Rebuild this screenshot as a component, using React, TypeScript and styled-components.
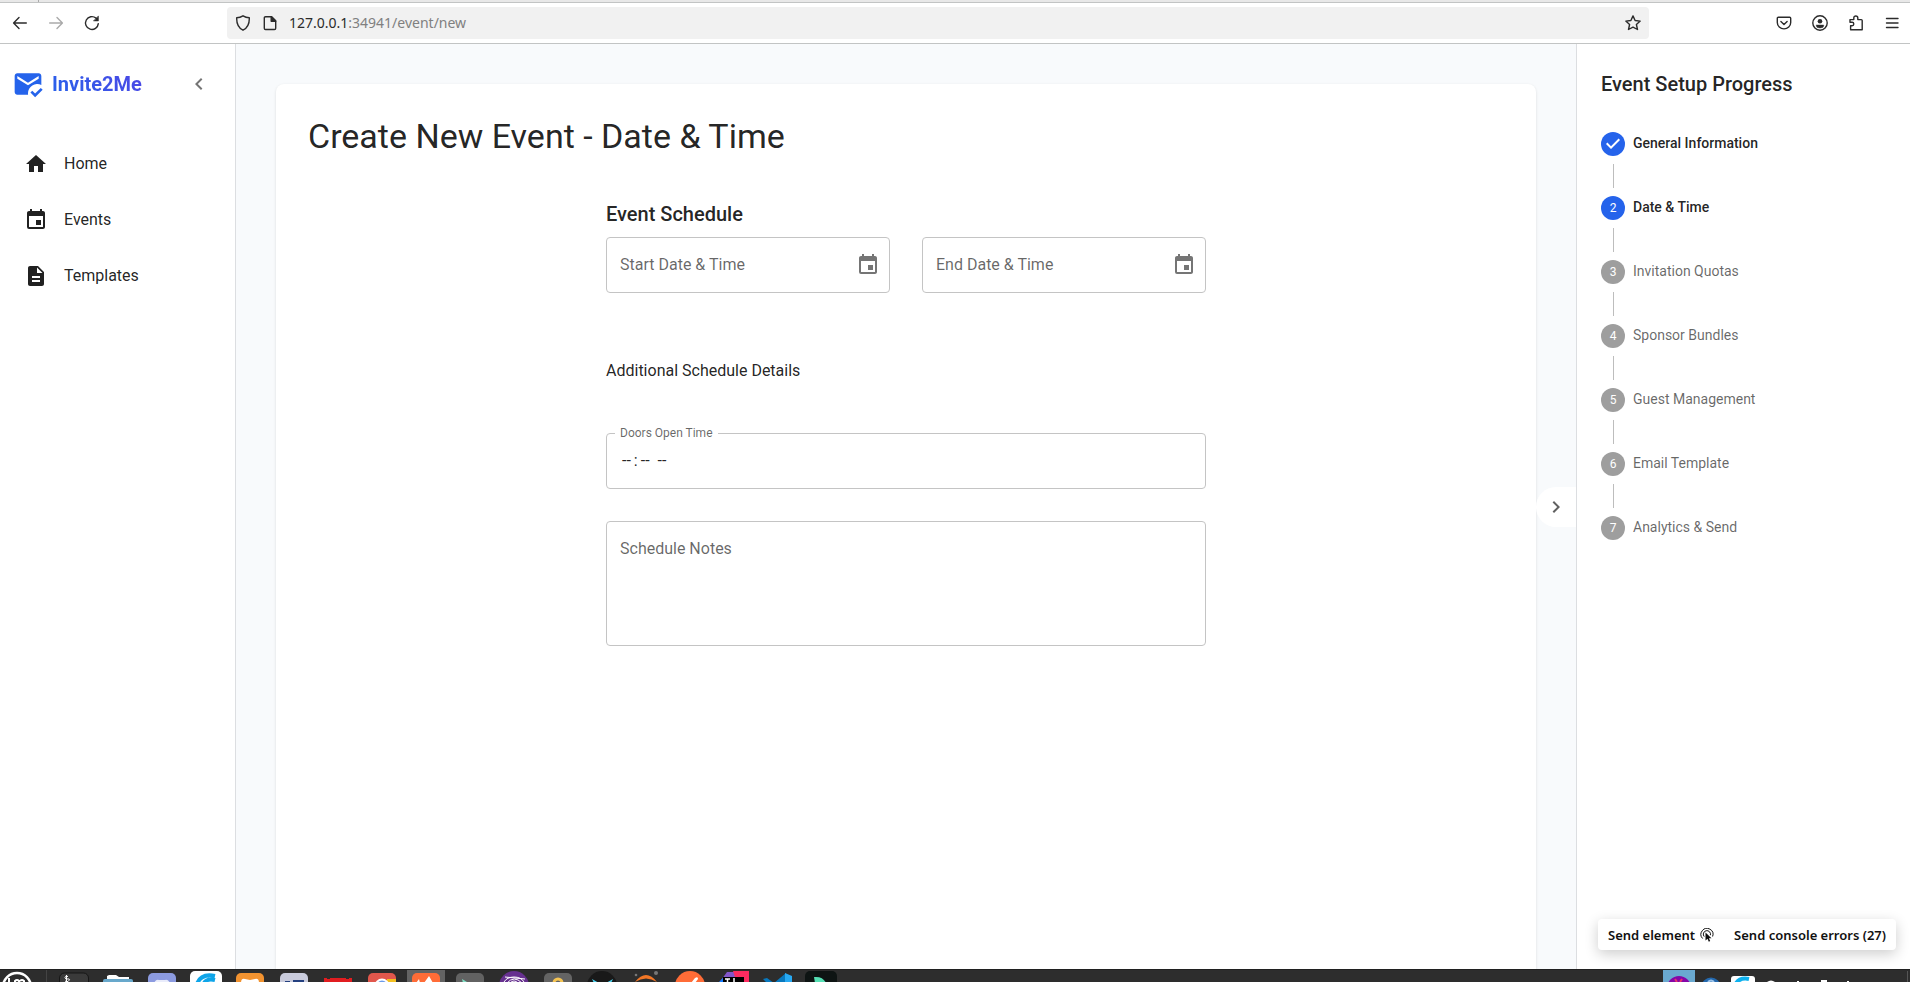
import React from "react";
import styled, { createGlobalStyle, css } from "styled-components";
import {
  MdChevronLeft,
  MdChevronRight,
  MdDescription,
  MdEvent,
  MdHome,
  MdMarkEmailRead,
} from "react-icons/md";

const ink = "rgba(0, 0, 0, 0.87)";
const muted = "rgba(0, 0, 0, 0.6)";
const blue = "#2563eb";
const divider = "#dcdee1";

const GlobalStyle = createGlobalStyle`
  *, *::before, *::after { box-sizing: border-box; }
  body {
    margin: 0;
    background: #fff;
    color: ${ink};
    font-family: Roboto, "Liberation Sans", sans-serif;
    font-size: 16px;
    line-height: 24px;
  }
  h1, h2, h3, ol, ul { margin: 0; padding: 0; list-style: none; }
  button, input, textarea { font: inherit; color: inherit; }
  button { border: 0; padding: 0; background: none; cursor: pointer; }
  svg { display: block; flex: none; }
`;

const Screen = styled.div`
  display: flex;
  flex-direction: column;
  height: 100vh;
  overflow: hidden;
`;

/* Browser chrome */

const TabStrip = styled.div`
  flex: none;
  height: 3px;
  padding-left: 38px;
  background: #e8e8e8;
  border-bottom: 1px solid #c2c4c4;
`;

const TabEdge = styled.div`
  width: 1px;
  height: 2px;
  background: #aaa;
`;

const Toolbar = styled.header`
  flex: none;
  display: flex;
  align-items: center;
  height: 41px;
  border-bottom: 1px solid #c2c4c4;
  color: #2b2b2b;
`;

const HistoryButtons = styled.nav`
  display: flex;
  gap: 20px;
  width: 227px;
  padding-left: 12px;
`;

const ChromeButton = styled.button<{ $dim?: boolean }>`
  width: 16px;
  height: 16px;
  opacity: ${(p) => (p.$dim ? 0.4 : 1)};
`;

const AddressBar = styled.div`
  flex: 1;
  display: flex;
  align-items: center;
  gap: 11px;
  height: 32px;
  padding: 0 8px;
  border-radius: 4px;
  background: #f1f1f1;
`;

const AddressText = styled.div`
  flex: 1;
  font-family: "Noto Sans", sans-serif;
  font-size: 14px;
  color: #808080;

  b {
    font-weight: 400;
    color: #2b2b2b;
  }
`;

const ToolbarActions = styled.div`
  display: flex;
  justify-content: flex-end;
  gap: 20px;
  width: 261px;
  padding-right: 10px;
`;

/* App shell */

const Shell = styled.div`
  position: relative;
  flex: 1;
  min-height: 0;
  display: flex;
  background: #f8fafc;
`;

const Sidebar = styled.aside`
  flex: none;
  width: 236px;
  background: #fff;
  border-right: 1px solid ${divider};
`;

const Brand = styled.div`
  display: flex;
  align-items: center;
  height: 80px;
  padding: 0 16px 0 12px;
  color: ${blue};
`;

const BrandName = styled.span`
  margin: 0 auto 0 8px;
  font-size: 20px;
  font-weight: 700;
  line-height: 32px;
  background: linear-gradient(45deg, ${blue}, #4f46e5);
  background-clip: text;
  color: transparent;
`;

const CollapseButton = styled.button`
  display: grid;
  place-items: center;
  width: 40px;
  height: 40px;
  color: #757575;
`;

const NavList = styled.ul`
  display: flex;
  flex-direction: column;
  gap: 8px;
  padding: 16px 8px;
`;

const NavLink = styled.a`
  display: flex;
  align-items: center;
  gap: 16px;
  height: 48px;
  padding: 0 16px;
  color: ${ink};
  text-decoration: none;
`;

const Content = styled.main`
  flex: 1;
  min-width: 0;
  padding: 40px;
  overflow: hidden;
`;

const Card = styled.section`
  min-height: 100vh;
  padding: 32px;
  border-radius: 8px;
  background: #fff;
  box-shadow: 0 1px 3px rgba(0, 0, 0, 0.12);
`;

const PageTitle = styled.h1`
  margin-bottom: 44px;
  font-size: 34px;
  font-weight: 400;
  line-height: 40px;
`;

const Form = styled.form`
  max-width: 600px;
  margin: 0 auto;
`;

const SectionTitle = styled.h2`
  margin-bottom: 8px;
  font-size: 20px;
  font-weight: 500;
  line-height: 29px;
`;

const SubTitle = styled.h3`
  margin: 64px 0 48px;
  font-size: 16px;
  font-weight: 400;
  line-height: 28px;
`;

const FieldRow = styled.div`
  display: grid;
  grid-template-columns: 1fr 1fr;
  gap: 32px;
`;

const FieldStack = styled.div`
  display: flex;
  flex-direction: column;
  gap: 32px;
`;

const Field = styled.div`
  position: relative;
  display: flex;
`;

const controlStyle = css`
  width: 100%;
  padding: 16px 14px;
  border: 1px solid #c4c4c4;
  border-radius: 4px;
  background: #fff;
  outline: 0;
  &:focus { border-color: ${blue}; }
`;

const TextInput = styled.input`
  ${controlStyle}
  height: 56px;
  &::-webkit-calendar-picker-indicator { display: none; }
  &::-webkit-datetime-edit-hour-field { padding: 0 3px 0 1px; }
  &::-webkit-datetime-edit-minute-field { padding: 0 3px; }
  &::-webkit-datetime-edit-ampm-field { padding: 0 3px; }
`;

const NotesInput = styled.textarea`
  ${controlStyle}
  height: 125px;
  resize: none;
`;

const FieldLabel = styled.label<{ $raised?: boolean }>`
  position: absolute;
  color: ${muted};
  pointer-events: none;
  ${(p) =>
    p.$raised
      ? css`
          top: -8px;
          left: 9px;
          padding: 0 5px;
          background: #fff;
          font-size: 12px;
          line-height: 16px;
        `
      : css`
          top: 16px;
          left: 14px;
        `}
`;

const PickerButton = styled.button`
  position: absolute;
  top: 16px;
  right: 10px;
  color: #757575;
`;

/* Setup progress */

const Progress = styled.aside`
  flex: none;
  width: 334px;
  padding: 24px;
  background: #fff;
  border-left: 1px solid ${divider};
`;

const ProgressTitle = styled.h2`
  margin-bottom: 32px;
  font-size: 20px;
  font-weight: 500;
  line-height: 32px;
`;

const Step = styled.li<{ $active: boolean }>`
  display: flex;
  gap: 8px;
  height: 24px;
  font-size: 14px;
  line-height: 22px;
  font-weight: ${(p) => (p.$active ? 500 : 400)};
  color: ${(p) => (p.$active ? ink : muted)};

  & + & {
    margin-top: 40px;
  }
  &:not(:last-child) > span::after {
    content: "";
    position: absolute;
    top: 32px;
    left: 12px;
    width: 1px;
    height: 24px;
    background: #bdbdbd;
  }
`;

const StepBadge = styled.span<{ $active: boolean }>`
  position: relative;
  flex: none;
  width: 24px;
  height: 24px;
  border-radius: 50%;
  background: ${(p) => (p.$active ? blue : "#9e9e9e")};
  color: #fff;
  font-size: 12px;
  font-weight: 400;
  line-height: 25px;
  text-align: center;
`;

const PanelToggle = styled.button`
  position: absolute;
  top: 50%;
  right: 334px;
  display: grid;
  place-items: center;
  width: 40px;
  height: 40px;
  margin-top: -20px;
  border-radius: 20px 0 0 20px;
  background: #fff;
  color: #616161;
`;

const DevTools = styled.div`
  position: absolute;
  right: 14px;
  bottom: 19px;
  display: flex;
  align-items: center;
  gap: 20px;
  height: 31px;
  padding: 0 10px;
  border-radius: 4px;
  background: #fff;
  box-shadow: 0 4px 14px rgba(0, 0, 0, 0.2);
`;

const DevButton = styled.button`
  display: flex;
  align-items: center;
  gap: 5px;
  font-family: "Noto Sans", sans-serif;
  font-size: 13px;
  font-weight: 600;
  color: #111;
`;

/* Desktop panel */

const Taskbar = styled.footer`
  flex: none;
  display: flex;
  height: 13px;
  overflow: hidden;
  background: #2d2d2d;
  border-top: 1px solid #202020;
`;

const MenuSlot = styled.button`
  width: 47px;
  margin-right: 5px;
  border-right: 1px solid #444;
`;

const TaskSlot = styled.button<{ $running?: boolean }>`
  width: 44px;
  border: 3px solid transparent;
  border-width: 0 3px;
  background: ${(p) => (p.$running ? "#636363" : "none")};
  background-clip: padding-box;
`;

const Tray = styled.div`
  display: flex;
  margin-left: auto;
`;

const iconBase = {
  width: 16,
  height: 16,
  viewBox: "0 0 16 16",
  fill: "none",
  stroke: "currentColor",
  strokeWidth: 1.4,
  strokeLinecap: "round" as const,
  strokeLinejoin: "round" as const,
  "aria-hidden": true,
};

const BackIcon = () => (
  <svg {...iconBase}><path d="M14.3 8H1.8M7 2.6 1.6 8 7 13.4" /></svg>
);
const ForwardIcon = () => (
  <svg {...iconBase}><path d="M1.7 8h12.5M9 2.6 14.4 8 9 13.4" /></svg>
);
const ReloadIcon = () => (
  <svg {...iconBase}>
    <path d="M14.3 8.6A6.4 6.4 0 1 1 12 3.1l1.2 1.1" />
    <path d="M14.4 1.3v4.6H9.8z" fill="currentColor" strokeWidth="0.6" />
  </svg>
);
const ShieldIcon = () => (
  <svg {...iconBase}>
    <path d="M8 .8c2 1.3 4.1 1.9 6.3 2 .2 5.2-1.6 10-6.3 12.4C3.300 12.800 1.500 8 1.700 2.800 3.900 2.700 6 2.100 8 .8z" />
  </svg>
);
const PageIcon = () => (
  <svg {...iconBase}>
    <path d="M3.500 1.700h6.200l4 4v7.600a1.200 1.200 0 0 1-1.200 1.200h-9a1.200 1.200 0 0 1-1.200-1.200V2.900a1.200 1.200 0 0 1 1.200-1.200z" />
    <path d="M9.200 1.700v4.500h4.500z" fill="currentColor" />
  </svg>
);
const StarIcon = () => (
  <svg {...iconBase}>
    <path d="M8 .9l2.100 4.600 5.100.6-3.800 3.400 1.100 5L8 12.200l-4.500 2.300 1.100-5L.8 6.100l5.100-.6z" />
  </svg>
);
const PocketIcon = () => (
  <svg {...iconBase}>
    <path d="M2.300 2.300h11.400a1 1 0 0 1 1 1v4.200a6.700 6.400 0 0 1-13.400 0V3.300a1 1 0 0 1 1-1z" />
    <path d="M4.900 6.500 8 9.500l3.100-3" />
  </svg>
);
const AccountIcon = () => (
  <svg {...iconBase}>
    <circle cx="8" cy="8" r="7.200" />
    <circle cx="8" cy="6.200" r="2.300" fill="currentColor" stroke="none" />
    <path d="M4.300 10h7.400v.8a3.700 2.200 0 0 1-7.400 0z" fill="currentColor" strokeWidth="0.400" />
  </svg>
);
const PuzzleIcon = () => (
  <svg {...iconBase}>
    <path d="M2 4.600h3.800V3a2 2 0 0 1 4 0v1.600h3.500a.9.9 0 0 1 .9.900v9.200H2.600v-4h1.500a1.700 1.700 0 0 0 0-3.400H2z" />
  </svg>
);
const MenuIcon = () => (
  <svg {...iconBase}><path d="M2.500 3.500h11.500M2.500 8h11.500M2.500 12.500h11.500" /></svg>
);
const PickIcon = () => (
  <svg width="14" height="14" viewBox="0 0 14 14" fill="none" stroke="#111" aria-hidden>
    <path d="M2.600 10.500A6 6 0 1 1 12.600 8.500M4.200 8.600A3.600 3.600 0 1 1 10.400 7.200" strokeWidth="1" />
    <path d="M5.500 4.600v8l2-1.800 1.300 2.900 1.400-.7-1.300-2.700h2.600z" fill="#111" stroke="none" />
  </svg>
);
const StepCheck = () => (
  <svg width="24" height="24" viewBox="0 0 24 24" fill="#fff" aria-label="Completed">
    <path d="M10 17l-5-5 1.400-1.400 3.600 3.600 7.600-7.600L19 8l-9 9z" />
  </svg>
);

/* Launcher icons: only their top edge shows above the window's bottom. */
const Rounded = ({ fill }: { fill: string }) => (
  <rect x="5" y="3" width="28" height="28" rx="5" fill={fill} />
);

const launchers: { name: string; running?: boolean; art: React.ReactNode }[] = [
  { name: "Terminal", art: (<>
    <rect x="4.500" y="3" width="29" height="28" rx="5" fill="#3a3a3a" stroke="#161616" />
    <path d="M13 6.500q-3-1-3 1t3 1.500 0 2.500q-2 .5-3-.5M11.500 5v8" stroke="#fff" fill="none" />
  </>) },
  { name: "Files", art: (<>
    <path d="M8 9V6l2-1h7l3 2h10v3H8z" fill="#fff" />
    <rect x="4" y="9" width="30" height="20" rx="2" fill="#68a8cb" />
  </>) },
  { name: "Chat", art: (<><Rounded fill="#8c9be0" /><path d="M11 13q2-4 5-3h6q3-1 5 3z" fill="#e9ecfb" /></>) },
  { name: "Sync", art: (<>
    <rect x="3" y="1" width="32" height="30" rx="5" fill="#fff" />
    <path d="M10 14Q14 3 28 6M17 13q3-5 11-3" stroke="#0ea5e9" strokeWidth="4" fill="none" />
  </>) },
  { name: "Database", art: (<><Rounded fill="#f29330" /><path d="M10 13q0-5 4-4l5 1 5-1q4-1 4 4z" fill="#fff" /></>) },
  { name: "Office", art: (<><Rounded fill="#c9cbdc" /><path d="M10 11h5v2h-5zM18 10h11v3H18z" fill="#24407f" /></>) },
  { name: "Video", art: <path d="M5 8h3v1h3V8h16v1h3V8h3v20H5z" fill="#e11d20" /> },
  { name: "Browser", art: (<>
    <Rounded fill="#e1574c" /><path d="M24 9h9v20h-9z" fill="#f4c020" />
    <circle cx="19" cy="16" r="7.500" fill="#fff" /><circle cx="19" cy="16" r="5.500" fill="#6d9bea" />
  </>) },
  { name: "Design", running: true, art: (<><Rounded fill="#ff6c37" /><path d="M9 13l3-4 1 4zM17 13l5-7 4 7z" fill="#fff" /></>) },
  { name: "Console", art: (<><Rounded fill="#626262" /><path d="M11 9l5 3-4 1z" fill="#7fe0c4" /></>) },
  { name: "Tor", art: (<>
    <circle cx="19" cy="16" r="15" fill="#66308f" />
    <path d="M9 12q3-5 10-5t10 5M12 13q7-8 15 0M10 7l20 2M15 13q4-4 8 0" stroke="#fff" fill="none" />
  </>) },
  { name: "Keys", art: (<><Rounded fill="#646464" /><circle cx="19" cy="13" r="4" fill="none" stroke="#f5c453" strokeWidth="3" /></>) },
  { name: "Code forge", art: (<><circle cx="19" cy="16" r="15" fill="#191919" /><path d="M9 9l7 4h-5zM30 9l-7 4h5z" fill="#4dd6f2" /></>) },
  { name: "Jupyter", art: (<>
    <path d="M8 12q11-14 22 0-11-7-22 0z" fill="#f37726" />
    <circle cx="29" cy="3" r="2" fill="#777" /><circle cx="9" cy="5" r="1.300" fill="#777" />
  </>) },
  { name: "Postman", art: (<><circle cx="19" cy="16" r="15" fill="#ff6c37" /><path d="M20 13l4-5q3-2 3 1l-3 4z" fill="#fff" /></>) },
  { name: "IDE", art: (<>
    <path d="M4 13L12 2h12v11z" fill="#8255c9" /><path d="M18 1h16v12H22z" fill="#fb2b60" /><path d="M4 12l4-4v5z" fill="#167dff" />
    <rect x="8" y="7" width="21" height="20" fill="#000" /><path d="M10 9h5M12.500 9v4M19 8v5" stroke="#fff" strokeWidth="1.500" />
  </>) },
  { name: "Editor", art: (<><path d="M4 9l4-1 7 5H8zM15 13L27 3v10z" fill="#0879bf" /><path d="M26 3l7 3v7h-7z" fill="#28a9f2" /></>) },
  { name: "Player", art: (<><rect x="2" y="1" width="32" height="30" rx="5" fill="#0e1413" /><path d="M11 7q9-1 12 6H12z" fill="#56e0b4" /></>) },
];

const steps = [
  "General Information",
  "Date & Time",
  "Invitation Quotas",
  "Sponsor Bundles",
  "Guest Management",
  "Email Template",
  "Analytics & Send",
];
const currentStep = 1;

const navItems = [
  { label: "Home", Icon: MdHome },
  { label: "Events", Icon: MdEvent },
  { label: "Templates", Icon: MdDescription },
];

const DateField = ({ id, label }: { id: string; label: string }) => (
  <Field>
    <TextInput id={id} type="text" />
    <FieldLabel htmlFor={id}>{label}</FieldLabel>
    <PickerButton type="button" aria-label={`Choose ${label}`}>
      <MdEvent size={24} />
    </PickerButton>
  </Field>
);

export default function App() {
  return (
    <Screen>
      <GlobalStyle />
      <TabStrip><TabEdge /></TabStrip>
      <Toolbar>
        <HistoryButtons>
          <ChromeButton aria-label="Back"><BackIcon /></ChromeButton>
          <ChromeButton aria-label="Forward" $dim><ForwardIcon /></ChromeButton>
          <ChromeButton aria-label="Reload"><ReloadIcon /></ChromeButton>
        </HistoryButtons>
        <AddressBar>
          <ShieldIcon />
          <PageIcon />
          <AddressText><b>127.0.0.1</b>:34941/event/new</AddressText>
          <ChromeButton aria-label="Bookmark"><StarIcon /></ChromeButton>
        </AddressBar>
        <ToolbarActions>
          <ChromeButton aria-label="Pocket"><PocketIcon /></ChromeButton>
          <ChromeButton aria-label="Account"><AccountIcon /></ChromeButton>
          <ChromeButton aria-label="Extensions"><PuzzleIcon /></ChromeButton>
          <ChromeButton aria-label="Menu"><MenuIcon /></ChromeButton>
        </ToolbarActions>
      </Toolbar>

      <Shell>
        <Sidebar>
          <Brand>
            <MdMarkEmailRead size={32} />
            <BrandName>Invite2Me</BrandName>
            <CollapseButton aria-label="Collapse sidebar"><MdChevronLeft size={24} /></CollapseButton>
          </Brand>
          <NavList>
            {navItems.map(({ label, Icon }) => (
              <li key={label}>
                <NavLink href="#"><Icon size={24} />{label}</NavLink>
              </li>
            ))}
          </NavList>
        </Sidebar>

        <Content>
          <Card>
            <PageTitle>Create New Event - Date &amp; Time</PageTitle>
            <Form>
              <SectionTitle>Event Schedule</SectionTitle>
              <FieldRow>
                <DateField id="start" label="Start Date & Time" />
                <DateField id="end" label="End Date & Time" />
              </FieldRow>
              <SubTitle>Additional Schedule Details</SubTitle>
              <FieldStack>
                <Field>
                  <TextInput id="doors" type="time" />
                  <FieldLabel htmlFor="doors" $raised>Doors Open Time</FieldLabel>
                </Field>
                <Field>
                  <NotesInput id="notes" />
                  <FieldLabel htmlFor="notes">Schedule Notes</FieldLabel>
                </Field>
              </FieldStack>
            </Form>
          </Card>
        </Content>

        <Progress>
          <ProgressTitle>Event Setup Progress</ProgressTitle>
          <ol>
            {steps.map((label, i) => (
              <Step key={label} $active={i <= currentStep}>
                <StepBadge $active={i <= currentStep}>
                  {i < currentStep ? <StepCheck /> : i + 1}
                </StepBadge>
                {label}
              </Step>
            ))}
          </ol>
        </Progress>
        <PanelToggle aria-label="Hide progress"><MdChevronRight size={24} /></PanelToggle>
        <DevTools>
          <DevButton>Send element <PickIcon /></DevButton>
          <DevButton>Send console errors (27)</DevButton>
        </DevTools>
      </Shell>

      <Taskbar>
        <MenuSlot aria-label="Menu">
          <svg width="36" height="12" viewBox="0 0 36 12" fill="none" stroke="#fff" aria-hidden>
            <circle cx="17" cy="17" r="14" strokeWidth="2.500" />
            <path d="M9 8v5M15 13v-2q2-2 4 0v2M20 11q2-2 4 0v2" strokeWidth="2" />
          </svg>
        </MenuSlot>
        {launchers.map(({ name, running, art }) => (
          <TaskSlot key={name} aria-label={name} $running={running}>
            <svg width="38" height="12" viewBox="0 0 38 12" aria-hidden>{art}</svg>
          </TaskSlot>
        ))}
        <Tray>
          <svg width="247" height="12" viewBox="0 0 247 12" aria-hidden>
            <rect width="32" height="12" fill="#6aa9d0" />
            <circle cx="16" cy="18" r="12" fill="#8506a8" />
            <path d="M12 9l2 3M19 9l-2 3" stroke="#e8336d" strokeWidth="2" />
            <circle cx="48" cy="17" r="9.500" fill="#2468ad" />
            <path d="M45 12q3-3 6 0" stroke="#9cc4ea" strokeWidth="2" fill="none" />
            <rect x="68" y="6" width="24" height="22" rx="3" fill="#fff" />
            <path d="M72 15q4-8 14-6" stroke="#0eb1ee" strokeWidth="4" fill="none" />
            <path d="M104 12q4-3 8 0zM134 11h2v1h-2zM158 10h6v2h-6zM184 11h2v1h-2z" fill="#fff" />
            <path d="M244.500 1v11" stroke="#555" />
          </svg>
        </Tray>
      </Taskbar>
    </Screen>
  );
}
